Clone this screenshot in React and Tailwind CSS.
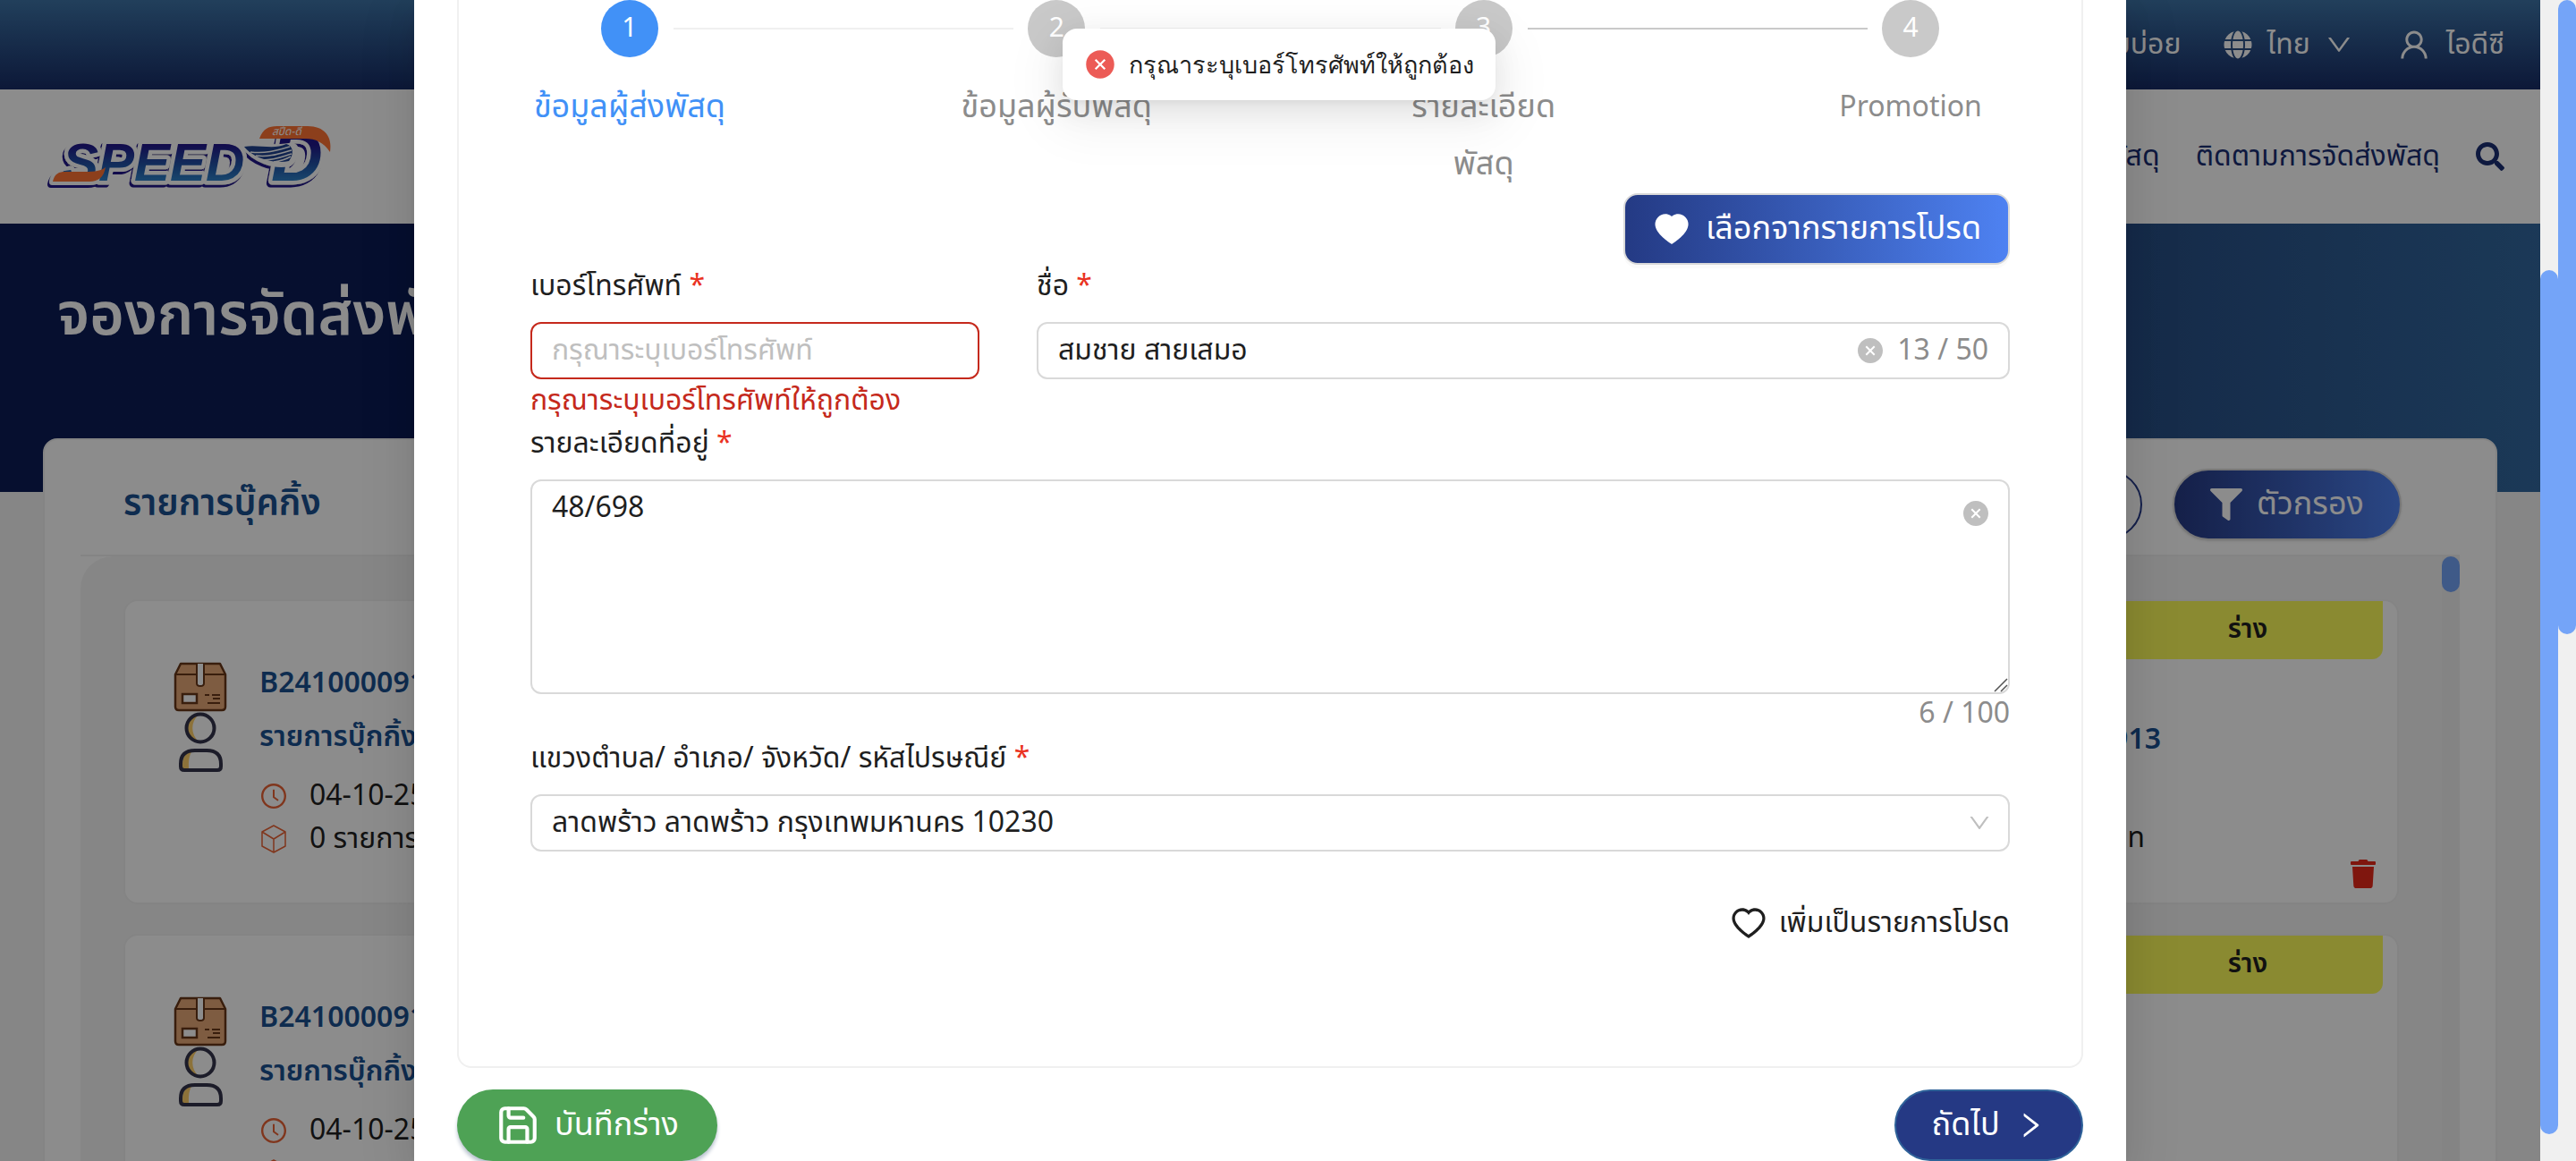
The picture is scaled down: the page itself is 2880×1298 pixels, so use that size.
import { AiFillCloseCircle, AiFillHeart, AiOutlineClockCircle, AiOutlineDown, AiOutlineHeart, AiOutlineRight, AiOutlineUser } from "react-icons/ai";
import { FaFilter, FaGlobe, FaSearch, FaTrash } from "react-icons/fa";
import { Save } from "lucide-react";

function Logo() {
  return (
    <svg viewBox="0 0 340 90" className="h-[90px] w-[340px]" role="img" aria-label="SPEED-D">
      <defs>
        <linearGradient id="ink" gradientUnits="userSpaceOnUse" x1="0" y1="26" x2="0" y2="74">
          <stop offset="0.1" stopColor="#24148a" />
          <stop offset="0.6" stopColor="#2356a8" />
          <stop offset="1" stopColor="#2f86cc" />
        </linearGradient>
        <filter id="rim" x="-10%" y="-10%" width="120%" height="130%">
          <feDropShadow dx="-2" dy="3" stdDeviation="0" floodColor="#24148a" />
        </filter>
      </defs>
      <g filter="url(#rim)">
        <path d="M15 73 C17 64 22 62 29 62 H52 L74 58 C72 68 66 73 56 73 Z" fill="#fff" stroke="#fff" strokeWidth="8" strokeLinejoin="round" />
        <g fontFamily="'Liberation Sans', sans-serif" fontWeight="700" fontStyle="italic" strokeLinejoin="round" stroke="#fff" strokeWidth="9" paintOrder="stroke" fill="url(#ink)">
          <text x="26" y="72" fontSize="60">SPEED</text>
          <text x="259" y="72" fontSize="80">D</text>
        </g>
        <path d="M227 33 C246 29 262 37 283 31 C292 36 288 48 280 54 C262 58 240 50 227 33 Z" fill="#fff" stroke="#fff" strokeWidth="4" />
      </g>
      <path d="M15 73 C17 64 22 62 29 62 H48 C58 62 68 62 74 57 C72 68 66 73 56 73 Z" fill="#ff7334" />
      <path d="M246 25 C250 14 256 11 266 11 H300 C318 11 328 22 325 40 C318 29 308 25 298 25 Z" fill="#ff7334" />
      <path d="M229 34 C244 31 262 38 276 31 C284 33 285 42 279 50 C262 54 238 46 229 34 Z" fill="#1f4391" />
      <path d="M236 40 C254 42 266 38 280 34 M242 44 C258 46 270 41 282 38 M250 49 C264 49 272 45 282 42 M262 51 C270 50 276 48 281 45" fill="none" stroke="#fff" strokeWidth="1.5" />
      <text x="260" y="21" fontSize="12" fill="#fff" fontFamily="'Noto Sans Thai', sans-serif" fontStyle="italic">สปีด-ดี</text>
    </svg>
  );
}

function ParcelIcon() {
  return (
    <svg viewBox="0 0 60 56" className="h-14 w-[60px]" aria-hidden="true">
      <path d="M8 2 H52 L58 14 V50 Q58 54 54 54 H6 Q2 54 2 50 V14 Z" fill="#e6a877" stroke="#683718" strokeWidth="2.5" strokeLinejoin="round" />
      <path d="M2 14 H58" stroke="#683718" strokeWidth="2" />
      <path d="M26 2 V24 Q26 27 30 27 Q34 27 34 24 V2" fill="#fff" stroke="#683718" strokeWidth="2" />
      <rect x="10" y="36" width="16" height="10" fill="#fff" stroke="#683718" strokeWidth="2.5" />
      <path d="M35 37 H40 M43 37 H52 M44 41 H52 M38 46 H52" stroke="#683718" strokeWidth="2" />
    </svg>
  );
}

function PersonIcon() {
  return (
    <svg viewBox="0 0 52 68" className="h-[68px] w-[52px]" aria-hidden="true">
      <circle cx="26" cy="18" r="15" fill="#fff" />
      <path d="M24 3 A15 15 0 0 0 24 33 A20 20 0 0 1 24 3" fill="#ffd06b" />
      <circle cx="26" cy="18" r="15.5" fill="none" stroke="#34344c" strokeWidth="4" />
      <path d="M4 65 V58 Q4 43 20 43 H33 Q49 43 49 58 V61 Q49 65 45 65 Z" fill="#fff" />
      <path d="M6 64 V58 Q6 46 17 43 Q12 50 13 64 Z" fill="#ffd06b" />
      <path d="M4 61 V58 Q4 43 20 43 H33 Q49 43 49 58 V61 Q49 65 45 65 H8 Q4 65 4 61 Z" fill="none" stroke="#34344c" strokeWidth="4" />
    </svg>
  );
}

function CubeIcon() {
  return (
    <svg viewBox="0 0 32 32" className="size-8" fill="none" stroke="#ea6336" strokeWidth="1.5" strokeLinejoin="round" aria-hidden="true">
      <path d="M16 1 L29 8 V24 L16 31 L3 24 V8 Z M3 8 L16 16 L29 8 M16 16 V31" />
    </svg>
  );
}

function BookingCard({ code, name, amount }) {
  return (
    <article className="flex h-[341px] shrink-0 justify-between rounded-2xl border-2 border-[#f0f0f0] bg-white pl-[54px] pr-4">
      <div className="flex pt-[62px] text-[32px]">
        <div className="mt-1.5 flex w-[60px] flex-col items-center">
          <ParcelIcon />
          <PersonIcon />
        </div>
        <div className="ml-9">
          <h3 className="h-[60px] font-semibold leading-[60px] text-[#1b5091]">{code}</h3>
          <p className="h-[60px] font-semibold leading-[60px] text-[#1b5091]">รายการบุ๊กกิ้ง</p>
          <p className="mt-3 flex h-12 items-center gap-6 leading-[48px]">
            <AiOutlineClockCircle className="size-8 text-[#ea6336]" />
            04-10-2567
          </p>
          <p className="flex h-12 items-center gap-6 leading-[48px]">
            <CubeIcon />0 รายการ
          </p>
        </div>
      </div>
      <div className="flex flex-col items-end text-[32px]">
        <span className="flex h-[65px] w-[302px] items-center justify-center rounded-b-xl bg-[#fbfb59] text-[30px] font-semibold">ร่าง</span>
        {name && <p className="mr-[248px] mt-[60px] h-[60px] font-semibold leading-[60px] text-[#1b5091]">{name}</p>}
        {amount && <p className="mr-[266px] mt-14 h-12 leading-[48px]">{amount}</p>}
        {amount && (
          <button type="button" aria-label="ลบ" className="mr-1.5 text-[#e8281a]">
            <FaTrash className="size-8" />
          </button>
        )}
      </div>
    </article>
  );
}

function Page() {
  return (
    <div className="flex min-h-full flex-col bg-[#f5f5f5]">
      <header className="flex h-[100px] shrink-0 items-center justify-end bg-linear-to-b from-[#3e74a7] to-[#182c66] px-[60px] text-[32px] text-white">
        <a href="#faq">คำถามที่พบบ่อย</a>
        <button type="button" className="ml-12 flex items-center gap-4">
          <FaGlobe className="size-8" />
          ไทย
          <AiOutlineDown className="size-8" />
        </button>
        <a href="#account" className="ml-12 flex items-center gap-4">
          <AiOutlineUser className="size-10" />
          ไอดีซี
        </a>
      </header>
      <nav className="flex h-[150px] shrink-0 items-center justify-between bg-white pl-11 pr-[60px] text-[32px] text-[#1b2f73]">
        <Logo />
        <div className="flex items-center gap-10">
          <a href="#send">จองการจัดส่งพัสดุ</a>
          <a href="#track">ติดตามการจัดส่งพัสดุ</a>
          <button type="button" aria-label="ค้นหา">
            <FaSearch className="size-8" />
          </button>
        </div>
      </nav>
      <section className="h-[300px] shrink-0 bg-linear-to-r from-[#0b1d57] from-40% via-[#264c83] via-82% to-[#3369a0] px-16 pt-14">
        <h1 className="text-[66px] font-semibold leading-[96px] text-white">จองการจัดส่งพัสดุ</h1>
      </section>
      <main className="mx-12 -mt-[60px] mr-[68px] flex flex-1 flex-col rounded-t-2xl border-2 border-[#f0f0f0] bg-white px-10">
        <div className="flex h-[130px] shrink-0 items-center justify-between border-b-2 border-[#f0f0f0] pl-12 pr-[65px] pt-4">
          <h2 className="text-[40px] font-semibold text-[#1b5091]">รายการบุ๊คกิ้ง</h2>
          <div className="flex items-center gap-[34px] text-[36px]">
            <button type="button" className="h-[78px] rounded-full border-2 border-[#263a88] px-12 text-[#263a88]">สร้างรายการ</button>
            <button type="button" className="flex h-20 w-[256px] items-center justify-center gap-4 rounded-full border-2 border-[#d9d9d9] bg-linear-to-r from-[#263a84] to-[#4e82f2] text-white shadow-sm">
              <FaFilter className="size-9" />
              ตัวกรอง
            </button>
          </div>
        </div>
        <div className="flex min-h-0 flex-1 rounded-tl-[36px] bg-[#f5f5f5]">
          <div className="flex flex-1 flex-col gap-[33px] pl-12 pr-12 pt-12">
            <BookingCard code="B2410000913" name="B2410000913" amount="0 บาท" />
            <BookingCard code="B2410000912" />
          </div>
          <div className="w-5 bg-[#f0f0f0]">
            <div className="h-10 rounded-full bg-[#74a4f8]" />
          </div>
        </div>
      </main>
    </div>
  );
}

const steps = ["ข้อมูลผู้ส่งพัสดุ", "ข้อมูลผู้รับพัสดุ", "รายละเอียด พัสดุ", "Promotion"];

function Steps() {
  return (
    <ol className="flex h-[216px]">
      {steps.map((title, i) => {
        const last = i === steps.length - 1;
        return (
          <li key={title} className={last ? "w-[222px] text-[32px]" : "flex-1 text-[36px]"}>
            <div className="flex items-center">
              <span className={i === 0 ? "ml-[79px] flex size-16 shrink-0 items-center justify-center rounded-full bg-[#4191f7] text-[30px] text-white" : "ml-[79px] flex size-16 shrink-0 items-center justify-center rounded-full bg-[#c9c9c9] text-[30px] text-white"}>
                {i + 1}
              </span>
              {!last && <span className={i < 2 ? "-mr-[63px] ml-[17px] h-0.5 flex-1 bg-[#f0f0f0]" : "-mr-[63px] ml-[17px] h-0.5 flex-1 bg-[#c9c9c9]"} />}
            </div>
            <p className={i === 0 ? "mt-6 w-[222px] text-center leading-[64px] text-[#4191f7]" : "mt-6 w-[222px] text-center leading-[64px] text-[#8c8c8c]"}>{title}</p>
          </li>
        );
      })}
    </ol>
  );
}

function Label({ htmlFor, children }) {
  return (
    <label htmlFor={htmlFor} className="mb-4 block h-12 text-[32px] leading-[48px]">
      {children} <span className="text-[#ea3323]">*</span>
    </label>
  );
}

function Modal() {
  return (
    <div role="dialog" aria-modal="true" className="mx-auto min-h-full w-[67.4%] bg-white px-12 shadow-[0_12px_32px_rgba(0,0,0,0.08),0_6px_12px_-8px_rgba(0,0,0,0.12),0_18px_56px_16px_rgba(0,0,0,0.05)]">
      <form>
        <div className="rounded-b-2xl border-2 border-t-0 border-[#f0f0f0] px-20 pb-[132px]">
          <Steps />
          <div className="flex justify-end">
            <button type="button" className="flex h-20 items-center gap-4 rounded-2xl border-2 border-[#d9d9d9] bg-linear-to-r from-[#243a84] to-[#4e82f2] px-[30px] text-[36px] text-white shadow-[0_4px_0_rgba(0,0,0,0.02)]">
              <AiFillHeart className="size-11" />
              เลือกจากรายการโปรด
            </button>
          </div>
          <div className="grid grid-cols-[6fr_13fr] gap-x-16">
            <div>
              <Label htmlFor="phone">เบอร์โทรศัพท์</Label>
              <input id="phone" type="tel" placeholder="กรุณาระบุเบอร์โทรศัพท์" aria-invalid="true" aria-describedby="phone-error" className="block h-16 w-full rounded-xl border-2 border-[#c5291c] px-[22px] text-[32px] placeholder:text-[#bfbfbf]" />
              <p id="phone-error" className="h-12 text-[32px] leading-[48px] text-[#c5291c]">กรุณาระบุเบอร์โทรศัพท์ให้ถูกต้อง</p>
            </div>
            <div>
              <Label htmlFor="name">ชื่อ</Label>
              <div className="flex h-16 items-center rounded-xl border-2 border-[#d9d9d9] px-[22px] text-[32px]">
                <input id="name" type="text" defaultValue="สมชาย สายเสมอ" className="min-w-0 flex-1" />
                <button type="button" aria-label="ล้างชื่อ" className="text-[#bfbfbf]">
                  <AiFillCloseCircle className="size-8" />
                </button>
                <span className="ml-3.5 text-[#8c8c8c]">13 / 50</span>
              </div>
            </div>
          </div>
          <Label htmlFor="address">รายละเอียดที่อยู่</Label>
          <div className="relative">
            <textarea id="address" defaultValue="48/698" className="block h-60 w-full resize-none rounded-xl border-2 border-[#d9d9d9] px-[22px] py-2 text-[32px] leading-[44px]" />
            <button type="button" aria-label="ล้างที่อยู่" className="absolute right-[22px] top-[22px] text-[#bfbfbf]">
              <AiFillCloseCircle className="size-8" />
            </button>
            <svg viewBox="0 0 16 16" className="absolute bottom-0.5 right-0.5 size-4" stroke="#555" strokeWidth="1.5" aria-hidden="true">
              <path d="M1 15 L15 1 M8 15 L15 8" />
            </svg>
          </div>
          <p className="h-12 text-right text-[32px] leading-[44px] text-[#8c8c8c]">6 / 100</p>
          <Label htmlFor="district">แขวงตำบล/ อำเภอ/ จังหวัด/ รหัสไปรษณีย์</Label>
          <div className="relative">
            <select id="district" className="block h-16 w-full appearance-none rounded-xl border-2 border-[#d9d9d9] bg-white px-[22px] text-[32px]">
              <option>ลาดพร้าว ลาดพร้าว กรุงเทพมหานคร 10230</option>
            </select>
            <AiOutlineDown className="pointer-events-none absolute right-5 top-[18px] size-7 text-[#bfbfbf]" />
          </div>
          <div className="mt-[52px] flex justify-end">
            <button type="button" className="flex h-14 items-center gap-3 text-[32px]">
              <AiOutlineHeart className="size-11" />
              เพิ่มเป็นรายการโปรด
            </button>
          </div>
        </div>
        <div className="mt-6 flex justify-between text-[36px] text-white">
          <button type="button" className="flex h-20 w-[291px] items-center justify-center gap-4 rounded-full bg-[#4ea255] shadow-[0_4px_4px_#b9c3cf]">
            <Save className="size-[50px]" strokeWidth={2} />
            บันทึกร่าง
          </button>
          <button type="button" className="flex h-20 w-[211px] items-center justify-center gap-4 rounded-full border-2 border-[#2f6299] bg-[#253984]">
            ถัดไป
            <AiOutlineRight className="size-9" />
          </button>
        </div>
      </form>
    </div>
  );
}

export default function App() {
  return (
    <div className="relative flex h-screen overflow-hidden font-['Noto_Sans_Thai','Noto_Sans',sans-serif] text-[#1f1f1f]">
      <div className="relative min-w-0 flex-1 overflow-hidden">
        <Page />
        <div className="absolute inset-0 flex bg-black/45">
          <div className="min-w-0 flex-1">
            <Modal />
          </div>
          <div className="w-5 bg-[#f0f0f0] pt-[302px]">
            <div className="h-[966px] rounded-full bg-[#74a4f8]" />
          </div>
        </div>
        <div role="alert" className="absolute left-1/2 top-8 flex h-20 -translate-x-1/2 items-center gap-3.5 rounded-2xl bg-white px-6 font-['Noto_Sans',sans-serif] text-[27px] shadow-[0_12px_32px_rgba(0,0,0,0.08),0_6px_12px_-8px_rgba(0,0,0,0.12),0_18px_56px_16px_rgba(0,0,0,0.05)]">
          <AiFillCloseCircle className="size-9 text-[#ec5b56]" />
          กรุณาระบุเบอร์โทรศัพท์ให้ถูกต้อง
        </div>
      </div>
      <div className="w-5 bg-[#f0f0f0]">
        <div className="h-[709px] rounded-full bg-[#74a4f8]" />
      </div>
    </div>
  );
}
